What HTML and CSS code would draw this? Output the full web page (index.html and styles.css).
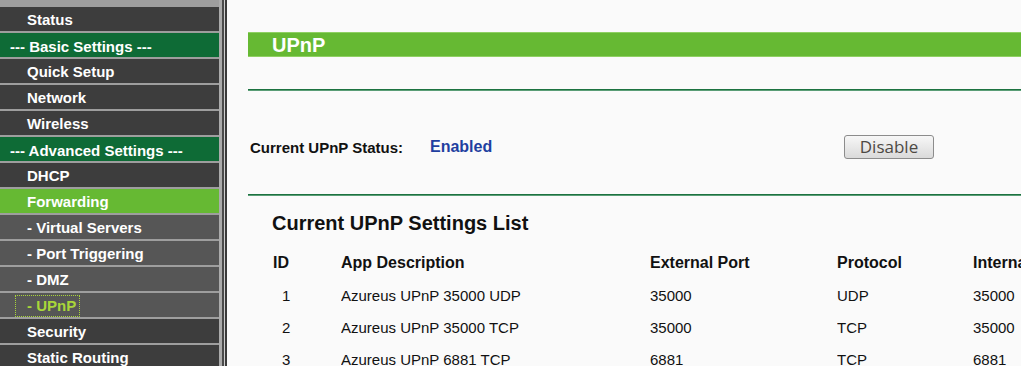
FILE: index.html
```html
<!DOCTYPE html>
<html lang="en">
<head>
    <meta charset="UTF-8">
    <title>UPnP</title>
    <link rel="stylesheet" href="styles.css">
</head>
<body>

<div class="page">
    <ul class="menu">
        <li class="item"><a>Status</a></li>
        <li class="item group">--- Basic Settings ---</li>
        <li class="item"><a>Quick Setup</a></li>
        <li class="item"><a>Network</a></li>
        <li class="item"><a>Wireless</a></li>
        <li class="item group">--- Advanced Settings ---</li>
        <li class="item"><a>DHCP</a></li>
        <li class="item open"><a>Forwarding</a></li>
        <li class="item sub"><a>- Virtual Servers</a></li>
        <li class="item sub"><a>- Port Triggering</a></li>
        <li class="item sub"><a>- DMZ</a></li>
        <li class="item sub"><a class="selected">- UPnP</a></li>
        <li class="item"><a>Security</a></li>
        <li class="item"><a>Static Routing</a></li>
    </ul>
    <div class="frame-edge"></div>

    <div class="main">
        <div class="title-bar">UPnP</div>
        <div class="rule"></div>

        <div class="status-row">
            <span class="status-label">Current UPnP Status:</span>
            <span class="status-value">Enabled</span>
            <button class="btn">Disable</button>
        </div>
        <div class="rule"></div>

        <h2 class="list-title">Current UPnP Settings List</h2>
        <table class="list">
            <colgroup>
                <col class="col-id">
                <col class="col-app">
                <col class="col-ext">
                <col class="col-proto">
                <col class="col-int">
            </colgroup>
            <tr>
                <th class="id-head">ID</th>
                <th>App Description</th>
                <th>External Port</th>
                <th>Protocol</th>
                <th>Internal Port</th>
            </tr>
            <tr>
                <td class="id-cell">1</td>
                <td>Azureus UPnP 35000 UDP</td>
                <td>35000</td>
                <td>UDP</td>
                <td>35000</td>
            </tr>
            <tr>
                <td class="id-cell">2</td>
                <td>Azureus UPnP 35000 TCP</td>
                <td>35000</td>
                <td>TCP</td>
                <td>35000</td>
            </tr>
            <tr>
                <td class="id-cell">3</td>
                <td>Azureus UPnP 6881 TCP</td>
                <td>6881</td>
                <td>TCP</td>
                <td>6881</td>
            </tr>
        </table>
    </div>
</div>

</body>
</html>
```

FILE: styles.css
```css
body {
    margin: 0;
    padding: 0;
    overflow: hidden;
    font-family: "Liberation Sans", Arial, sans-serif;
    background-color: #fafafa;
}
.page {
    display: flex;
    height: 366px;
}
.menu {
    list-style: none;
    margin: 0;
    padding: 7px 0 0 0;
    width: 219px;
    flex-shrink: 0;
    background-color: #9e9e9e;
    border-right: 3px solid #ababab;
}
.item {
    display: flex;
    align-items: center;
    box-sizing: border-box;
    height: 24px;
    padding-top: 2px;
    margin-bottom: 2px;
    padding-left: 16px;
    background-color: #3d3d3d;
    color: #fff;
    font-size: 15px;
    font-weight: bold;
    white-space: nowrap;
}
.item a {
    display: inline-block;
    padding-left: 11px;
    line-height: 20px;
}
.item.group {
    background-color: #0e6b36;
    padding-left: 10px;
}
.item.open {
    background-color: #66b933;
}
.item.sub {
    background-color: #565656;
}
.item a.selected {
    color: #a9d63a;
    outline: 1px dotted #a9d63a;
    padding-right: 3px;
}
.frame-edge {
    width: 1px;
    flex-shrink: 0;
    background-color: #cfcfcf;
    border-left: 2px solid #4a4a4a;
    border-right: 2px solid #3a3a3a;
}
.main {
    flex: 1;
    padding: 32px 0 0 21px;
    overflow: hidden;
}
.title-bar {
    height: 23px;
    line-height: 24px;
    padding-left: 24px;
    background-color: #66b933;
    border-top: 1px solid #8fd063;
    border-bottom: 1px solid #8fd063;
    color: #fff;
    font-size: 20px;
    font-weight: bold;
}
.rule {
    height: 1px;
    margin-top: 32px;
    background-color: #1c7240;
    border-bottom: 1px solid #5a9d76;
}
.status-row {
    display: flex;
    align-items: center;
    height: 24px;
    margin: 44px 0 35px 2px;
}
.status-label {
    width: 180px;
    font-size: 15px;
    font-weight: bold;
    color: #111;
}
.status-value {
    width: 414px;
    font-size: 16px;
    font-weight: bold;
    color: #1f3fa0;
}
.btn {
    width: 90px;
    height: 24px;
    padding: 0;
    font-family: "Open Sans", "DejaVu Sans", sans-serif;
    font-size: 17px;
    line-height: 20px;
    color: #4d4944;
    background: linear-gradient(#f7f7f7, #dadada);
    border: 1px solid #8c8c8c;
    border-radius: 3px;
}
.status-row + .rule {
    margin-top: 0;
}
.list-title {
    margin: 15px 0 0 24px;
    height: 24px;
    line-height: 24px;
    font-size: 20px;
    color: #111;
}
.list {
    margin: 12px 0 0 24px;
    border-collapse: collapse;
    table-layout: fixed;
    width: 901px;
    white-space: nowrap;
    color: #111;
}
.col-id {
    width: 69px;
}
.col-app {
    width: 309px;
}
.col-ext {
    width: 187px;
}
.col-proto {
    width: 136px;
}
.col-int {
    width: 200px;
}
.list th,
.list td {
    height: 32px;
    padding: 0;
    text-align: left;
    vertical-align: middle;
    overflow: hidden;
}
.list th {
    font-size: 16px;
}
.list td {
    font-size: 15px;
}
.list th.id-head {
    padding-left: 1px;
}
.list td.id-cell {
    padding-left: 10px;
}
```
